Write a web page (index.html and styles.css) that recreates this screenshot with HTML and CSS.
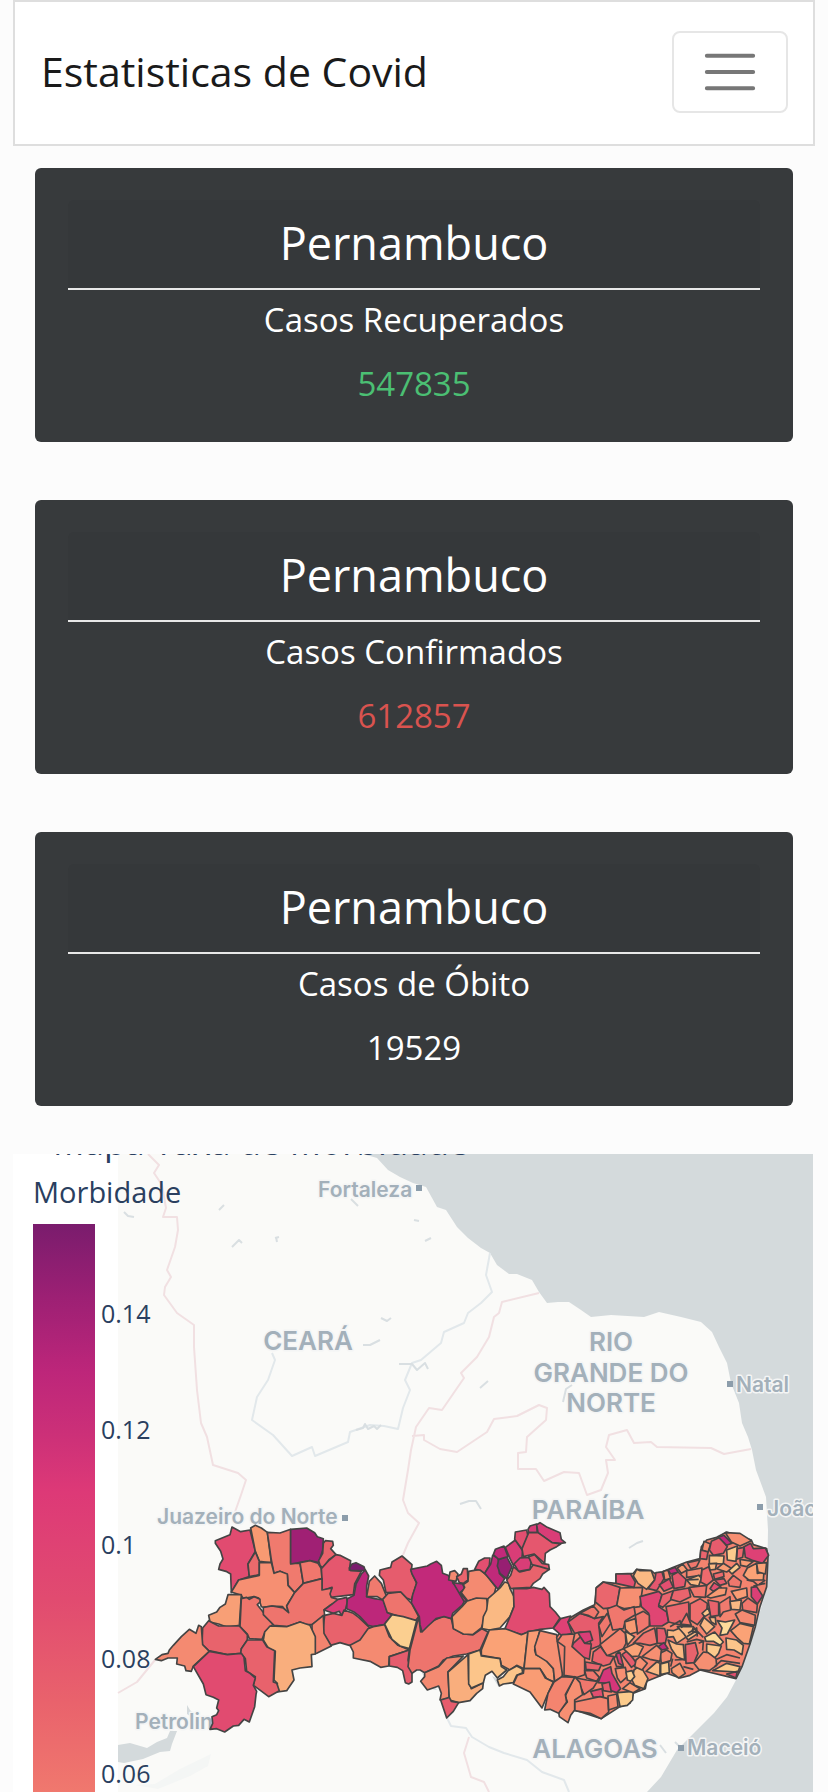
FILE: index.html
```html
<!DOCTYPE html>
<html lang="pt-BR">
<head>
<meta charset="utf-8">
<title>Estatisticas de Covid</title>
<meta name="viewport" content="width=device-width">
<link rel="stylesheet" href="styles.css">
</head>
<body>
<nav class="navbar">
  <a class="brand" href="#">Estatisticas de Covid</a>
  <button class="toggler" type="button" aria-label="Menu">
    <svg width="58" height="58" viewBox="0 0 30 30" aria-hidden="true"><path d="M3 6.600h24M3 15h24M3 23.400h24" stroke="#777" stroke-width="2" stroke-linecap="round"/></svg>
  </button>
</nav>
<main>
  <div class="cards">
    <section class="card">
      <h2 class="card-title">Pernambuco</h2>
      <p class="card-label">Casos Recuperados</p>
      <p class="card-value green">547835</p>
    </section>
    <section class="card">
      <h2 class="card-title">Pernambuco</h2>
      <p class="card-label">Casos Confirmados</p>
      <p class="card-value red">612857</p>
    </section>
    <section class="card">
      <h2 class="card-title">Pernambuco</h2>
      <p class="card-label">Casos de Óbito</p>
      <p class="card-value">19529</p>
    </section>
  </div>
  <div class="plot">
<svg class="map" viewBox="13 1154 800 638" role="img" aria-label="Mapa Taxa de Morbidade">
<defs>
<linearGradient id="scale" x1="0" y1="1224" x2="0" y2="1792" gradientUnits="userSpaceOnUse">
<stop offset="0" stop-color="#7a1c6d"/><stop offset=".13" stop-color="#9d2074"/><stop offset=".26" stop-color="#bd267a"/><stop offset=".37" stop-color="#cc3078"/><stop offset=".47" stop-color="#dd3977"/><stop offset=".66" stop-color="#e14b70"/><stop offset=".84" stop-color="#e9626c"/><stop offset="1" stop-color="#f0786e"/>
</linearGradient>
</defs>
<rect class="paper" x="13" y="1154" width="800" height="638"/>
<rect class="land" x="118" y="1154" width="695" height="638"/>
<path class="sea" d="M363 1154L377 1158 388 1170 400 1177 413 1183 426 1187 437 1207 446 1210 457 1227 468 1238 481 1248 490 1253 497 1265 509 1274 517 1274 532 1280 539 1292 547 1303 558 1302 569 1302 581 1310 591 1317 611 1315 644 1317 659 1312 681 1317 701 1322 712 1332 719 1347 727 1363 731 1383 739 1403 742 1423 748 1437 752 1450 756 1470 766 1497 768 1530 767 1587 754 1633 742 1663 736 1680 727 1697 714 1713 697 1730 677 1750 661 1777 647 1792H813V1154Z"/>
<path class="sea" d="M118 1745L130 1743 147 1748 157 1742 167 1738 170 1731 177 1731 172 1744 170 1751 160 1752 143 1759 124 1763 118 1762ZM187 1705L190 1710 192 1712 190 1716 187 1714ZM421 1671L430 1680 437 1690 430 1689ZM492 1676L500 1680 498 1686Z"/>
<path class="pale" d="M135 1785L155 1784 180 1769 211 1754 208 1766 190 1776 158 1789Z"/>
<path class="river" d="M272 1353L275 1360 268 1380 257 1397 252 1420 273 1435 292 1456 312 1447 315 1456 348 1442 350 1432 370 1425 384 1426 398 1429 403 1408 410 1390 405 1380 412 1363 421 1360 441 1343 444 1332 464 1323 468 1313 481 1303 492 1292 486 1275 490 1253M447 1718L451 1726 466 1728 472 1737 489 1747 504 1753 527 1760 542 1772 564 1780 569 1792"/>
<path class="lake" d="M124 1212l4 4 6 1M219 1210l5-5M232 1247l7-7 3 3M275 1238l4-1M276 1237l1 5M351 1199l7 7M381 1318l6 3 4-3M363 1345l7 0 10-5M399 1364l13 0 5 6 8-7 3 6M356 1430l7-2 2-4 3 5 6-3 3 3 4-4M414 1220l5 1M425 1241l6-3M480 1388l8-7M563 1402l3-13 6-4M460 1504l9-3 7 0 5 8M629 1548l8-5 6-2M660 1745l6 8M675 1742l4 4"/>
<path class="border" d="M148 1154L159 1165 154 1173 162 1185 166 1208 163 1217 177 1217 178 1230 175 1247 167 1270 171 1277 165 1287 164 1295 177 1313 194 1325 194 1347 197 1390 201 1423 207 1437 213 1465 238 1473 246 1480 241 1495 235 1512M539 1293L502 1302 499 1313 494 1317 489 1337 477 1357 461 1373 464 1378 442 1410 429 1408 416 1427 411 1450 408 1470 403 1500 408 1513 419 1523 408 1543 403 1555M412 1436L424 1435 424 1440 440 1449 457 1452 487 1432 494 1419 517 1416 539 1405 547 1408 546 1420 527 1437 526 1452 518 1453 518 1469 536 1469 544 1481 564 1472 579 1473 587 1495 601 1490 608 1473 606 1460 615 1460 606 1447 609 1435 627 1430 634 1443 651 1442 657 1447 711 1448 724 1454 751 1449M155 1660L137 1682 118 1693M469 1737L464 1753 471 1777 484 1782 489 1792"/>
<g class="dots"><path d="M416 1185h6v6h-6zM342 1515h6v6h-6zM727 1381h6v6h-6zM757 1504h6v6h-6zM678 1745h6v6h-6z"/></g>
<g class="place city">
<text x="318" y="1197">Fortaleza</text><text x="157" y="1524">Juazeiro do Norte</text><text x="736" y="1392">Natal</text><text x="767" y="1516">João</text><text x="135" y="1729">Petrolina</text><text x="687" y="1755">Maceió</text>
</g>
<g class="place state">
<text x="308" y="1350">CEARÁ</text><text x="611" y="1351">RIO</text><text x="611" y="1382">GRANDE DO</text><text x="611" y="1412">NORTE</text><text x="588" y="1519">PARAÍBA</text><text x="595" y="1758">ALAGOAS</text>
</g>
<g class="towns" transform="translate(140 1500) scale(.33333)">
<polygon fill="#e14b70" points="276,81 302,95 330,90 346,154 324,192 328,230 296,240 274,278 272,222 258,214 236,208 240,192 249,177 242,154 226,130 226,122 270,104"/>
<polygon fill="#f89a72" points="332,84 346,76 364,84 382,97 394,188 376,186 358,184 346,154"/>
<polygon fill="#ea6a6c" points="346,156 358,184 358,224 328,230 324,192"/>
<polygon fill="#f07a6e" points="382,97 420,99 452,88 452,190 480,190 490,250 464,278 444,256 442,224 420,214 402,220 394,180"/>
<polygon fill="#a02074" points="452,88 500,84 524,98 532,110 550,116 548,150 536,188 510,182 452,192"/>
<polygon fill="#f0776d" points="480,188 510,182 534,190 544,206 546,236 490,250"/>
<polygon fill="#e8636c" points="550,130 556,122 578,124 580,136 572,146 588,164 568,178 548,204 540,196 536,182 548,160"/>
<polygon fill="#e5576e" points="588,164 600,166 632,182 628,210 664,214 644,252 640,284 572,292 568,280 576,262 546,272 546,236 544,206 568,180"/>
<polygon fill="#7a1c6d" points="628,204 636,192 648,188 672,200 676,212 632,212"/>
<polygon fill="#f68f72" points="358,188 394,188 402,220 420,214 442,222 444,256 464,278 440,318 446,338 436,334 428,320 396,318 370,322 364,320 356,294 342,290 310,296 304,286 274,276 296,240 358,226"/>
<polygon fill="#f89f76" points="264,284 304,284 298,376 262,382 236,372 210,366 206,346 230,336 240,322 256,312"/>
<polygon fill="#ef756c" points="304,296 320,292 328,298 342,290 360,298 360,306 352,314 372,340 400,372 376,394 366,418 328,416 322,402 300,380"/>
<polygon fill="#ee746d" points="490,250 546,236 546,270 576,264 570,282 574,292 600,300 570,316 552,330 554,346 516,374 500,374 480,366 440,380 402,376 370,344 370,322 396,318 430,324 446,338 440,318 464,278"/>
<polygon fill="#d93d77" points="594,298 620,292 622,306 616,330 604,346 598,334 580,340 552,330 574,314"/>
<polygon fill="#e8626c" points="554,346 580,340 606,346 612,330 640,340 656,352 688,382 680,408 640,434 628,436 600,428 572,436 548,398"/>
<polygon fill="#f4846f" points="516,374 550,346 552,400 574,438 530,460 524,462 524,420 516,398"/>
<polygon fill="#f9ae7d" points="390,378 440,380 480,366 510,376 526,410 526,462 514,464 516,500 480,504 456,510 462,540 440,572 412,576 412,550 402,540 406,454 386,446 370,420 374,396"/>
<polygon fill="#e8636c" points="188,384 206,362 220,370 236,378 298,378 322,404 322,420 304,446 304,460 262,464 206,452 186,434"/>
<polygon fill="#f48a71" points="46,478 66,464 84,460 88,450 100,436 124,410 148,388 168,400 176,376 184,380 188,434 208,454 160,498 154,514 138,512 134,498 110,492 112,474 84,474 64,482"/>
<polygon fill="#e8626c" points="304,446 322,420 368,420 380,440 404,452 400,546 410,550 418,572 386,590 362,572 340,556 346,530 320,514 316,476 302,460"/>
<polygon fill="#e14b70" points="208,454 262,464 304,460 312,472 316,512 330,520 346,534 340,556 350,574 348,584 344,620 328,666 312,658 296,676 280,678 254,696 230,686 210,688 218,670 216,650 230,644 236,632 230,624 236,600 220,592 198,584 190,552 160,500"/>
</g>
<g class="towns" transform="translate(340 1500) scale(.33333)">
<polygon fill="#bd277a" points="76,210 86,228 80,258 80,290 104,296 130,300 142,336 156,344 132,374 100,380 84,376 60,350 42,336 20,326 22,296 42,286 48,252 64,222"/>
<polygon fill="#f48a71" points="30,436 60,420 84,386 100,380 134,374 148,410 174,436 208,450 148,470 146,498 122,502 90,484 40,474 40,456"/>
<polygon fill="#f07a6e" points="88,244 104,228 124,250 140,290 128,300 112,290 80,290"/>
<polygon fill="#e65c6d" points="120,210 152,202 156,186 186,168 216,194 214,214 230,250 214,300 200,294 182,276 138,278 130,240 118,226"/>
<polygon fill="#ee746d" points="128,298 144,280 182,276 216,312 236,350 226,362 186,352 142,338"/>
<polygon fill="#fbcf90" points="134,372 156,344 190,350 230,362 208,446 180,438 156,418"/>
<polygon fill="#e65c6d" points="148,470 208,450 204,480 216,520 216,546 206,552 196,548 188,512 172,502 148,498"/>
<polygon fill="#ee746d" points="236,350 242,396 270,366 312,348 334,356 340,384 370,402 400,404 426,386 444,396 420,450 380,462 340,468 310,480 296,498 254,518 240,510 230,510 216,520 204,500 210,450"/>
<polygon fill="#c2297a" points="212,208 262,198 272,192 290,184 304,196 308,220 324,226 344,252 376,300 366,316 338,340 334,356 312,350 288,356 264,378 246,396 240,374 238,350 214,308 218,284 230,248 216,222"/>
<polygon fill="#f48a71" points="326,240 330,216 344,212 354,222 348,244"/>
<polygon fill="#ea646d" points="350,230 364,222 370,206 382,206 384,240 370,250 358,248"/>
<polygon fill="#c2297a" points="338,248 368,252 374,266 360,278 382,304 372,304 344,256"/>
<polygon fill="#f48a71" points="386,214 420,208 440,226 468,262 460,292 440,298 404,296 384,304 364,278 374,262 370,254 384,244"/>
<polygon fill="#f89a72" points="336,350 366,320 380,304 410,294 440,296 444,328 424,384 398,404 370,402 340,386"/>
<polygon fill="#fab983" points="444,296 480,264 494,246 506,250 510,266 522,290 522,320 510,350 480,384 448,390 426,386 430,350 440,330"/>
<polygon fill="#e24f70" points="404,208 416,184 434,174 450,174 448,196 434,220 420,210"/>
<polygon fill="#c02a7a" points="434,220 452,192 458,166 474,174 478,196 478,220 494,236 474,268"/>
<polygon fill="#971f72" points="476,178 500,170 516,200 500,236 480,220 472,198"/>
<polygon fill="#c2297a" points="460,164 466,148 492,138 504,170 476,178"/>
<polygon fill="#d93d77" points="496,142 526,120 548,152 546,172 520,196 510,176"/>
<polygon fill="#e24f70" points="526,96 560,90 564,108 548,150 524,118"/>
<polygon fill="#d93d77" points="564,88 570,78 590,72 592,98 566,98"/>
<polygon fill="#d93d77" points="590,74 600,68 622,82 660,98 664,118 676,128 662,130 636,128 594,98"/>
<polygon fill="#e5576e" points="566,98 594,98 636,128 662,132 650,140 630,150 616,160 614,190 582,162 550,170 546,146"/>
<polygon fill="#e8636c" points="520,200 540,216 570,208 580,194 620,200 628,208 608,222 600,236 580,250 572,262 512,266 500,240 512,226"/>
<polygon fill="#d93d77" points="522,192 540,174 566,172 574,184 570,208 536,214"/>
<polygon fill="#e5576e" points="566,170 584,164 606,190 626,194 628,208 600,200 576,194"/>
<polygon fill="#e14b70" points="520,266 560,266 580,262 606,268 612,262 628,280 630,320 646,336 660,354 640,384 600,388 564,396 544,404 494,388 510,350 522,320"/>
<polygon fill="#faa276" points="448,390 496,386 544,404 564,396 552,506 530,496 510,510 484,496 480,476 424,466 424,450"/>
<polygon fill="#f99c74" points="564,394 600,390 584,450 588,464 620,480 640,506 644,546 620,536 600,506 552,506"/>
<polygon fill="#f68f72" points="600,392 650,404 656,426 672,430 674,500 666,530 644,544 640,506 620,484 588,464 584,440"/>
<polygon fill="#f48a71" points="254,518 296,500 320,474 370,468 324,516 328,596 300,600 304,580 296,558 262,570 242,544 254,530"/>
<polygon fill="#f9ae7d" points="324,516 384,464 386,540 394,566 430,548 428,566 410,580 390,602 356,608 328,600"/>
<polygon fill="#fcc58a" points="386,462 420,450 424,468 480,476 484,500 500,510 472,534 456,514 436,526 430,548 394,564 386,552"/>
<polygon fill="#fcc58a" points="472,540 490,530 504,512 530,498 546,506 548,518 530,526 520,548 490,552 478,558"/>
<polygon fill="#f99c74" points="552,506 600,506 616,534 640,546 620,590 606,624 570,576 520,552 532,526 550,520"/>
<polygon fill="#e65c6d" points="302,600 328,592 334,604 356,608 340,634 320,654"/>
</g>
<g class="towns" transform="translate(540 1500) scale(.33333)">
<polygon fill="#f4846f" points="50,412 88,355 130,330 164,314 170,262 190,246 228,250 228,222 280,220 290,208 334,212 344,220 366,216 400,202 440,186 480,176 484,140 500,120 530,112 560,96 634,120 640,134 680,146 684,170 680,260 660,320 646,380 630,432 606,500 588,536 480,510 450,526 420,534 380,520 320,544 316,566 280,580 270,610 240,620 184,656 104,630 70,540"/>
<polygon fill="#de4175" points="40,385 62,356 92,348 84,366 96,400 66,408"/>
<polygon fill="#e65c6d" points="84,366 120,340 164,355 190,350 176,370 180,410 182,436 152,448 150,400 122,396 104,400"/>
<polygon fill="#e24f70" points="100,430 122,410 136,430 154,432 148,478 126,470 96,440"/>
<polygon fill="#d93d77" points="114,398 150,394 158,420 134,430 122,412"/>
<polygon fill="#f0776d" points="120,340 160,318 176,336 164,356 144,346"/>
<polygon fill="#f4846f" points="66,404 104,402 96,440 134,474 134,524 112,532 72,526 74,440 52,424"/>
<polygon fill="#ea666d" points="168,264 190,246 240,262 230,322 190,326 166,306"/>
<polygon fill="#f68f72" points="240,264 308,262 304,290 300,320 254,326 230,318"/>
<polygon fill="#e24f70" points="228,222 272,222 286,246 282,262 228,250"/>
<polygon fill="#fab983" points="280,228 290,208 300,212 334,212 344,240 320,268 294,250"/>
<polygon fill="#e04573" points="300,290 356,274 366,284 356,320 380,336 386,366 366,378 330,378 326,340 304,320"/>
<polygon fill="#f0776d" points="202,326 230,316 252,330 282,320 286,344 256,362 250,386 218,390 206,346"/>
<polygon fill="#f0776d" points="176,376 202,340 212,370 186,410"/>
<polygon fill="#f0776d" points="286,346 310,334 328,346 328,378 292,402"/>
<polygon fill="#f89a72" points="254,366 286,356 292,396 270,402 256,388"/>
<polygon fill="#f4846f" points="180,434 240,386 256,400 258,430 250,446 200,468"/>
<polygon fill="#fab983" points="256,394 284,410 262,436"/>
<polygon fill="#ee746d" points="280,430 310,400 344,384 352,430 330,436 300,430"/>
<polygon fill="#e5576e" points="344,240 348,218 366,216 372,236 350,272 324,266"/>
<polygon fill="#f48a71" points="370,214 384,210 392,236 374,240"/>
<polygon fill="#e24f70" points="358,254 388,236 400,262 372,274"/>
<polygon fill="#c2297a" points="384,210 406,202 414,216 392,222"/>
<polygon fill="#e5576e" points="396,226 414,216 438,238 434,260 402,266"/>
<polygon fill="#f99c74" points="412,204 428,192 442,210 424,220"/>
<polygon fill="#f0776d" points="442,188 480,180 470,200 452,206"/>
<polygon fill="#ea646d" points="366,284 400,272 392,300 368,322 356,316"/>
<polygon fill="#ea646d" points="400,272 446,264 452,290 420,306 392,298"/>
<polygon fill="#ea666d" points="378,320 446,306 448,376 426,376 386,366"/>
<polygon fill="#f0776d" points="422,372 440,340 454,376"/>
<polygon fill="#ee6e6d" points="450,312 480,296 502,310 500,340 472,374 450,360"/>
<polygon fill="#f48a71" points="440,212 486,204 484,226 440,232"/>
<polygon fill="#fab983" points="440,240 476,226 484,234 476,258 452,254"/>
<path d="M440 240L476 238"/>
<polygon fill="#f0776d" points="448,262 500,256 496,292 462,290"/>
<polygon fill="#ee6a6d" points="486,210 506,200 520,240 500,256 482,246"/>
<polygon fill="#e24f70" points="510,266 522,248 544,262 520,274"/>
<polygon fill="#f89a72" points="500,290 536,264 560,264 556,284 512,294"/>
<polygon fill="#e8636c" points="504,300 536,306 536,346 512,350"/>
<polygon fill="#f07a6e" points="538,310 570,290 572,330 550,336 540,350"/>
<polygon fill="#f68f72" points="492,124 512,132 504,156 486,150"/>
<polygon fill="#ea646d" points="482,150 504,156 500,178 480,176"/>
<polygon fill="#e65c6d" points="514,124 540,112 562,140 550,160 520,166 508,150"/>
<polygon fill="#c2297a" points="536,112 552,106 576,130 560,136"/>
<polygon fill="#f68f72" points="556,98 600,100 634,122 600,138 574,126"/>
<polygon fill="#fcc58a" points="508,166 552,168 550,192 508,190"/>
<polygon fill="#fccb8c" points="560,150 592,138 588,184 562,180"/>
<polygon fill="#de4175" points="612,140 632,130 640,146 676,144 686,166 668,190 640,182 616,172"/>
<polygon fill="#ee6a6d" points="592,146 612,142 608,172 590,178"/>
<polygon fill="#f99c74" points="600,178 640,184 620,200 602,196"/>
<polygon fill="#faa276" points="622,204 650,190 652,220 672,216 670,240 626,240 610,226"/>
<polygon fill="#faa276" points="650,190 680,188 676,222 654,216"/>
<path d="M620 240L640 244 654 256 676 240M640 258L676 250"/>
<polygon fill="#fab983" points="506,192 530,190 526,208 510,210"/>
<polygon fill="#f99c74" points="530,206 550,190 576,206 560,216"/>
<polygon fill="#fccb8c" points="566,212 590,190 600,202 576,222"/>
<polygon fill="#f0776d" points="564,244 580,226 604,244 600,262 568,258"/>
<polygon fill="#ee6a6d" points="520,222 550,214 552,230 524,238"/>
<polygon fill="#e65c6d" points="524,240 552,236 560,250 540,256"/>
<polygon fill="#dc3f76" points="634,262 650,260 668,288 652,312 634,290"/>
<polygon fill="#f99c74" points="574,274 620,264 622,290 590,300"/>
<polygon fill="#fab983" points="570,304 604,300 600,330 574,328"/>
<polygon fill="#f0776d" points="606,310 624,294 652,314 650,338 608,330"/>
<polygon fill="#f48a71" points="586,342 606,330 646,346 644,376 600,368"/>
<polygon fill="#faa276" points="572,392 600,370 640,380 628,432 610,430 590,412"/>
<polygon fill="#fddb9a" points="532,362 556,366 584,360 562,402 540,406 546,384"/>
<polygon fill="#fddb9a" points="494,412 524,396 550,426 540,436 520,424 498,424"/>
<polygon fill="#fcc58a" points="558,414 590,420 610,436 606,464 582,450 560,448"/>
<polygon fill="#fccb8c" points="500,432 544,438 536,460 524,474 500,456"/>
<polygon fill="#fab983" points="480,376 492,352 524,380 500,402"/>
<polygon fill="#fcc58a" points="486,340 504,324 510,340 494,350"/>
<polygon fill="#fab983" points="508,352 526,352 528,374 514,366"/>
<polygon fill="#f68f72" points="462,490 490,456 504,458 528,476 530,496 508,512 476,508"/>
<polygon fill="#e8636c" points="436,434 466,428 474,460 462,488 438,490"/>
<polygon fill="#fccb8c" points="518,512 560,490 600,500 594,516"/>
<path d="M524 500L544 482 600 490M530 478L560 464 600 474"/>
<polygon fill="#e24f70" points="560,522 592,514 588,534"/>
<polygon fill="#e65c6d" points="350,384 374,386 380,410 376,430 352,430"/>
<polygon fill="#c2297a" points="354,440 372,428 384,446 366,450"/>
<polygon fill="#fab983" points="382,390 400,392 420,384 440,410 410,430 400,410 382,412"/>
<polygon fill="#fab983" points="384,420 410,432 430,434 434,480 410,470 394,446"/>
<polygon fill="#f48a71" points="360,460 380,450 396,460 392,482 364,490"/>
<polygon fill="#f68f72" points="306,470 350,436 364,450 360,484 330,478"/>
<polygon fill="#fab983" points="318,514 350,486 360,490 360,528"/>
<polygon fill="#fccb8c" points="362,492 386,486 388,518 362,524"/>
<polygon fill="#f99c74" points="394,506 420,490 436,520 416,534 396,518"/>
<polygon fill="#fab983" points="412,380 460,380 474,400 444,420 432,402"/>
<path d="M390 380L420 362 426 384M440 410L470 392 490 412M444 400L470 384 472 410M440 426L470 418 494 424M404 480L436 478M392 500L398 476M430 500L460 508M476 430L490 424 488 452M460 382L456 394 480 400"/>
<polygon fill="#f0776d" points="222,476 236,454 250,500 230,500"/>
<polygon fill="#d93d77" points="228,462 240,458 250,498 236,490"/>
<polygon fill="#e65c6d" points="246,464 262,452 290,490 274,502"/>
<polygon fill="#ea646d" points="160,456 182,440 200,466 222,470 210,492 190,498 156,484"/>
<polygon fill="#ea646d" points="136,486 184,494 176,512 138,508"/>
<polygon fill="#f0776d" points="134,512 160,512 178,532 170,544 140,534"/>
<polygon fill="#d6367a" points="190,510 212,500 216,520 242,566 230,578 212,572 206,550 174,548"/>
<polygon fill="#f68f72" points="226,506 256,502 262,530 242,548 232,534"/>
<polygon fill="#fab983" points="282,510 300,496 324,536 312,566 284,556 276,540"/>
<polygon fill="#fccb8c" points="258,516 276,512 284,530 272,544 262,540"/>
<polygon fill="#f68f72" points="288,480 300,470 322,490 306,510 284,500"/>
<polygon fill="#faa276" points="250,446 286,430 310,440 296,468 276,470"/>
<polygon fill="#fccb8c" points="232,578 280,574 278,600 262,616 240,620"/>
<polygon fill="#f99c74" points="248,566 270,548 300,566 280,578"/>
<polygon fill="#e24f70" points="152,574 186,566 190,590 160,592"/>
<polygon fill="#e65c6d" points="186,552 208,546 214,576 190,572"/>
<polygon fill="#f0776d" points="108,534 140,540 172,544 160,564 132,584 124,566"/>
<polygon fill="#f4846f" points="104,606 180,590 204,596 206,636 184,656 150,640 104,632"/>
<polygon fill="#f48a71" points="204,588 230,582 234,620 206,630"/>
<polygon fill="#f68f72" points="104,530 120,548 128,584 104,600 104,630 92,646 84,668 58,650 56,636 82,606 76,588"/>
<polygon fill="#f4846f" points="42,546 66,530 104,532 76,584 80,606 56,640 30,628 14,630 24,580"/>
</g>
<g class="legend">
<text class="plot-title" x="53" y="1155">Mapa Taxa de Morbidade</text>
<text class="legend-title" x="33" y="1203">Morbidade</text>
<rect x="33" y="1224" width="62" height="568" fill="url(#scale)"/>
<text x="101" y="1323">0.14</text><text x="101" y="1439">0.12</text><text x="101" y="1554">0.1</text><text x="101" y="1668">0.08</text><text x="101" y="1783">0.06</text>
</g>
</svg>
  </div>
</main>
</body>
</html>
```

FILE: styles.css
```css
* { box-sizing: border-box; }
body {
  margin: 0;
  padding: 0 13px;
  background: #fcfcfc;
  font-family: "Open Sans", "Noto Sans", sans-serif;
}
.navbar {
  display: flex;
  align-items: center;
  justify-content: space-between;
  padding: 29px 25px 31px 26px;
  background: #fff;
  border: 2px solid #dedede;
}
.brand {
  padding-bottom: 2px;
  color: #1a1a1a;
  font-size: 41px;
  line-height: 60px;
  text-decoration: none;
}
.toggler {
  display: flex;
  align-items: center;
  justify-content: center;
  padding: 10px 27px;
  background: #fff;
  border: 2px solid #e6e6e6;
  border-radius: 8px;
}
.cards {
  display: grid;
  gap: 58px;
  padding: 22px 22px 48px;
}
.card {
  padding: 32px 33px 24px;
  background: #373a3c;
  border-radius: 6px;
  color: #fff;
  text-align: center;
}
.card-title {
  margin: 0;
  padding: 12px 0 14px;
  background: #35383a;
  border-bottom: 2px solid #e8e8e8;
  border-radius: 6px 6px 0 0;
  font-size: 45px;
  font-weight: 400;
  line-height: 62px;
}
.card-label, .card-value {
  margin: 0;
  font-size: 33px;
}
.card-label { line-height: 60px; }
.card-value { line-height: 68px; }
.green { color: #4bbf73; }
.red { color: #d9534f; }
.plot { padding-right: 2px; }
.map { display: block; width: 100%; height: auto; }
.paper { fill: #fff; }
.land { fill: #fafaf8; }
.sea { fill: #d4dadc; }
.pale { fill: #f4f6f5; }
.river, .lake, .border { fill: none; stroke-width: 2; stroke-linejoin: round; }
.river { stroke: #e2e8eb; }
.lake { stroke: #d9dfe2; }
.border { stroke: #f1e0e2; }
.dots { fill: #8c9dab; }
.place {
  fill: #a3b0ba;
  font-family: Inter, "Open Sans", sans-serif;
  font-weight: 600;
  stroke: #f4f5f5;
  stroke-width: 3;
  stroke-linejoin: round;
  paint-order: stroke;
}
.city { font-size: 21px; }
.state { font-size: 26px; text-anchor: middle; }
.towns { stroke: #444; stroke-width: 5; stroke-linejoin: round; }
.towns path { fill: none; }
.legend { fill: #2a3f5f; font-size: 25px; }
.legend-title { font-size: 29px; }
.plot-title { font-size: 35px; }
```
